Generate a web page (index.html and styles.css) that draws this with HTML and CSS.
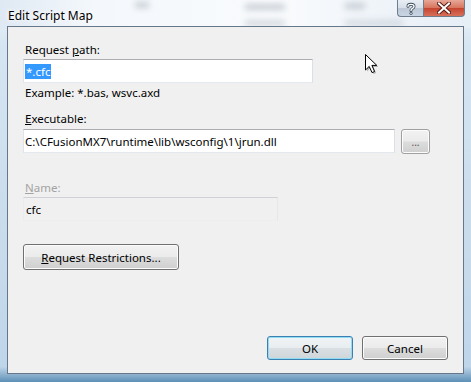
FILE: index.html
```html
<!DOCTYPE html>
<html>
<head>
  <title>Edit Script Map</title>
  <link rel="stylesheet" href="styles.css">
</head>
<body>
  <div class="window">
    <div class="glass">
      <span class="blur b1"></span>
      <span class="blur b2"></span>
      <span class="blur b3"></span>
      <span class="blur b4"></span>
      <span class="blur b5"></span>
    </div>

    <div class="titlebar">
      <div class="title">Edit Script Map</div>
      <div class="caption-buttons">
        <div class="cap help">
          <svg width="12" height="13" viewBox="0 0 12 13">
            <path d="M3 4.2 C3 1.8 9 1.6 9 4.4 C9 6.4 6 6.4 6 8.6" fill="none" stroke="#3b4a5c" stroke-width="3" stroke-linecap="round"/>
            <path d="M3 4.2 C3 1.8 9 1.6 9 4.4 C9 6.4 6 6.4 6 8.6" fill="none" stroke="#fff" stroke-width="1.4" stroke-linecap="round"/>
            <circle cx="6" cy="11.3" r="1.5" fill="#3b4a5c"/>
            <circle cx="6" cy="11.3" r="0.8" fill="#fff"/>
          </svg>
        </div>
        <div class="cap close">
          <svg width="14" height="12" viewBox="0 0 14 12">
            <path d="M2 1.5 L12 10.5 M12 1.5 L2 10.5" stroke="#5a1b14" stroke-width="4" stroke-linecap="square"/>
            <path d="M2 1.5 L12 10.5 M12 1.5 L2 10.5" stroke="#fff" stroke-width="2" stroke-linecap="square"/>
          </svg>
        </div>
      </div>
    </div>

    <div class="client">
      <label class="label">Request <u>p</u>ath:</label>
      <div class="field path-field"><span class="selected">*.cfc</span></div>
      <div class="hint">Example: *.bas, wsvc.axd</div>

      <label class="label gap-top"><u>E</u>xecutable:</label>
      <div class="row">
        <div class="field exe-field">C:\CFusionMX7\runtime\lib\wsconfig\1\jrun.dll</div>
        <button class="btn browse">...</button>
      </div>

      <label class="label disabled name-label"><u>N</u>ame:</label>
      <div class="field name-field readonly">cfc</div>

      <button class="btn restrictions"><u>R</u>equest Restrictions...</button>

      <div class="footer">
        <button class="btn default">OK</button>
        <button class="btn">Cancel</button>
      </div>
    </div>

    <svg class="pointer" width="14" height="22" viewBox="0 0 14 22">
      <path d="M1.5 1.5 L1.5 17 L5.2 13.4 L8 19.6 L10.6 18.5 L7.9 12.4 L12.8 12.4 Z" fill="#000" opacity="0.25" transform="translate(1.5 1.5)"/>
      <path d="M1.5 1.5 L1.5 17 L5.2 13.4 L8 19.6 L10.6 18.5 L7.9 12.4 L12.8 12.4 Z" fill="#fff" stroke="#000" stroke-width="1" stroke-linejoin="miter"/>
    </svg>
  </div>
</body>
</html>
```

FILE: styles.css
```css
body {
  margin: 0;
  width: 471px;
  height: 382px;
  overflow: hidden;
  font-family: "Noto Sans", "Open Sans", sans-serif;
  font-size: 11.5px;
  color: #000;
}
.window {
  position: relative;
  width: 471px;
  height: 382px;
  box-sizing: border-box;
  padding: 0 7px 8px 7px;
  display: flex;
  flex-direction: column;
  background: linear-gradient(to bottom, #eef4fa 0%, #d6e5f2 12%, #c9dcec 60%, #bfd5ea 96%, #5d8fb5 100%);
  overflow: hidden;
}
.glass {
  position: absolute;
  left: 0;
  top: 0;
  right: 0;
  height: 28px;
  background: linear-gradient(to right, #dfe9f3 0%, #f4f8fc 20%, #f9fbfd 60%, #e6eef6 100%);
}
.blur {
  position: absolute;
  background: #8f9aa6;
  filter: blur(3px);
  opacity: 0.45;
  height: 6px;
}
.b1 { left: 135px; top: 2px; width: 14px; }
.b2 { left: 245px; top: 4px; width: 40px; }
.b3 { left: 245px; top: 20px; width: 40px; opacity: 0.35; }
.b4 { left: 345px; top: 3px; width: 20px; }
.b5 { left: 345px; top: 20px; width: 58px; opacity: 0.3; }

.titlebar {
  position: relative;
  height: 26px;
  display: flex;
  align-items: flex-start;
}
.title {
  padding: 7px 0 0 1px;
  font-size: 12px;
  text-shadow: 0 0 6px #fff, 0 0 4px #fff;
}
.caption-buttons {
  margin-left: auto;
  margin-right: -1px;
  display: flex;
}
.cap {
  height: 17px;
  box-sizing: border-box;
  border: 1px solid #6f7c8b;
  border-top: none;
  display: flex;
  align-items: center;
  justify-content: center;
}
.help {
  width: 26px;
  border-right: none;
  border-bottom-left-radius: 4px;
  background: linear-gradient(to bottom, #e9eef4 0%, #d7dee7 50%, #bcc8d6 52%, #c9d5e2 100%);
}
.close {
  width: 42px;
  border-bottom-right-radius: 4px;
  background: linear-gradient(to bottom, #e8a898 0%, #d7765f 48%, #c5452f 52%, #d7705a 100%);
}

.client {
  position: relative;
  flex: 1;
  background: #f0f0f0;
  border: 1px solid #67778a;
  display: flex;
  flex-direction: column;
  align-items: flex-start;
  padding: 15px 0 13px 15px;
}
.label {
  display: block;
  line-height: 15px;
  padding-left: 2px;
}
.gap-top {
  margin-top: 11px;
}
.name-label {
  margin-top: 26px;
}
.disabled {
  color: #a3a3a3;
}
.field {
  height: 24px;
  box-sizing: border-box;
  border: 1px solid;
  border-color: #abadb3 #dbdfe6 #e3e9ef #e2e3ea;
  background: #fff;
  padding: 0 1px;
  margin-top: 2px;
  display: flex;
  align-items: center;
  white-space: nowrap;
  line-height: 15px;
}
.path-field {
  width: 290px;
}
.selected {
  background: #3399ff;
  color: #fff;
  padding: 0 1px;
}
.hint {
  line-height: 15px;
  margin-top: 2px;
  padding-left: 2px;
}
.row {
  display: flex;
  align-items: flex-start;
  gap: 6px;
  margin-top: 1px;
}
.exe-field {
  width: 372px;
  padding-left: 1px;
}
.name-field {
  width: 255px;
}
.readonly {
  background: #f0f0f0;
  border-color: #cfd1d6 #e5e7ea #eceef0 #e9ebee;
  padding-left: 2px;
}
.btn {
  font-family: inherit;
  font-size: 11.5px;
  color: #000;
  height: 24px;
  box-sizing: border-box;
  border: 1px solid #707070;
  border-radius: 3px;
  padding: 0;
  background: linear-gradient(to bottom, #f2f2f2 0%, #ebebeb 49%, #dddddd 51%, #cfcfcf 100%);
  box-shadow: inset 0 0 0 1px #fcfcfc;
}
.browse {
  width: 29px;
  height: 25px;
  margin-top: 2px;
  font-size: 10px;
  color: #555;
  border-color: #a0a0a0;
}
.restrictions {
  width: 156px;
  height: 26px;
  margin-top: 23px;
}
.footer {
  margin-top: auto;
  align-self: flex-end;
  display: flex;
  gap: 9px;
  padding-right: 15px;
}
.footer .btn {
  width: 86px;
}
.default {
  border-color: #3c7fb1;
  box-shadow: inset 0 0 0 1px #8fdcf5;
  background: linear-gradient(to bottom, #f1f4f6 0%, #e8edf0 49%, #d9dfe3 51%, #cfd6da 100%);
}
.pointer {
  position: absolute;
  left: 364px;
  top: 53px;
}
```
